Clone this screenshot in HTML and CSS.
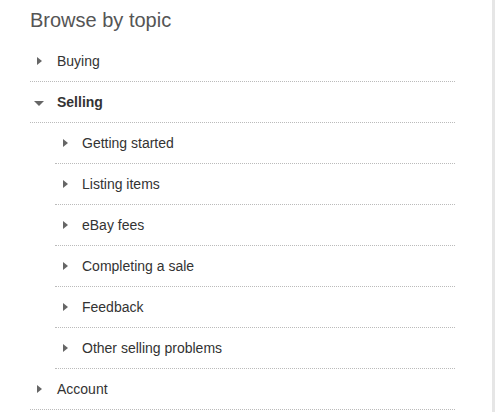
FILE: index.html
```html
<!DOCTYPE html>
<html lang="en">
<head>
  <meta charset="UTF-8">
  <meta name="viewport" content="width=device-width, initial-scale=1.0">
  <title>Browse by topic</title>
  <link rel="stylesheet" href="styles.css">
</head>
<body>

  <div class="browse">
    <h2 class="title">Browse by topic</h2>

    <ul class="topics">
      <li class="topic"><a href="#" class="row"><span class="arrow"></span>Buying</a></li>
      <li class="topic open">
        <a href="#" class="row"><span class="arrow"></span>Selling</a>
        <ul class="subtopics">
          <li class="topic"><a href="#" class="row"><span class="arrow"></span>Getting started</a></li>
          <li class="topic"><a href="#" class="row"><span class="arrow"></span>Listing items</a></li>
          <li class="topic"><a href="#" class="row"><span class="arrow"></span>eBay fees</a></li>
          <li class="topic"><a href="#" class="row"><span class="arrow"></span>Completing a sale</a></li>
          <li class="topic"><a href="#" class="row"><span class="arrow"></span>Feedback</a></li>
          <li class="topic"><a href="#" class="row"><span class="arrow"></span>Other selling problems</a></li>
        </ul>
      </li>
      <li class="topic"><a href="#" class="row"><span class="arrow"></span>Account</a></li>
    </ul>
  </div>

</body>
</html>
```

FILE: styles.css
```css
* {
  box-sizing: border-box;
  margin: 0;
  padding: 0;
}

body {
  font-family: Arial, "Liberation Sans", sans-serif;
  background-color: #fff;
  color: #333;
}

.browse {
  width: 495px;
  height: 412px;
  padding-left: 30px;
  padding-right: 37px;
  border-right: 3px solid #e6e6e6;
  overflow: hidden;
}

.title {
  font-size: 20px;
  font-weight: normal;
  line-height: 24px;
  color: #555;
  padding: 8px 0 9px;
}

.topics,
.subtopics {
  list-style: none;
}

.subtopics {
  padding-left: 25px;
}

.row {
  display: flex;
  align-items: center;
  height: 41px;
  padding-left: 27px;
  position: relative;
  border-bottom: 1px dotted #bbb;
  font-size: 14px;
  color: #333;
  text-decoration: none;
}

.subtopics .topic:last-child .row {
  border-bottom: 1px dotted #bbb;
}

.open > .row {
  font-weight: bold;
}

/* right-pointing caret */
.arrow {
  position: absolute;
  left: 7px;
  top: 16px;
  width: 0;
  height: 0;
  border-top: 4px solid transparent;
  border-bottom: 4px solid transparent;
  border-left: 5px solid #666;
}

.subtopics .arrow {
  left: 8px;
}

/* down caret for the open topic */
.open > .row .arrow {
  left: 4px;
  top: 19px;
  border-left: 5px solid transparent;
  border-right: 5px solid transparent;
  border-top: 5px solid #666;
  border-bottom: 0;
}
```
